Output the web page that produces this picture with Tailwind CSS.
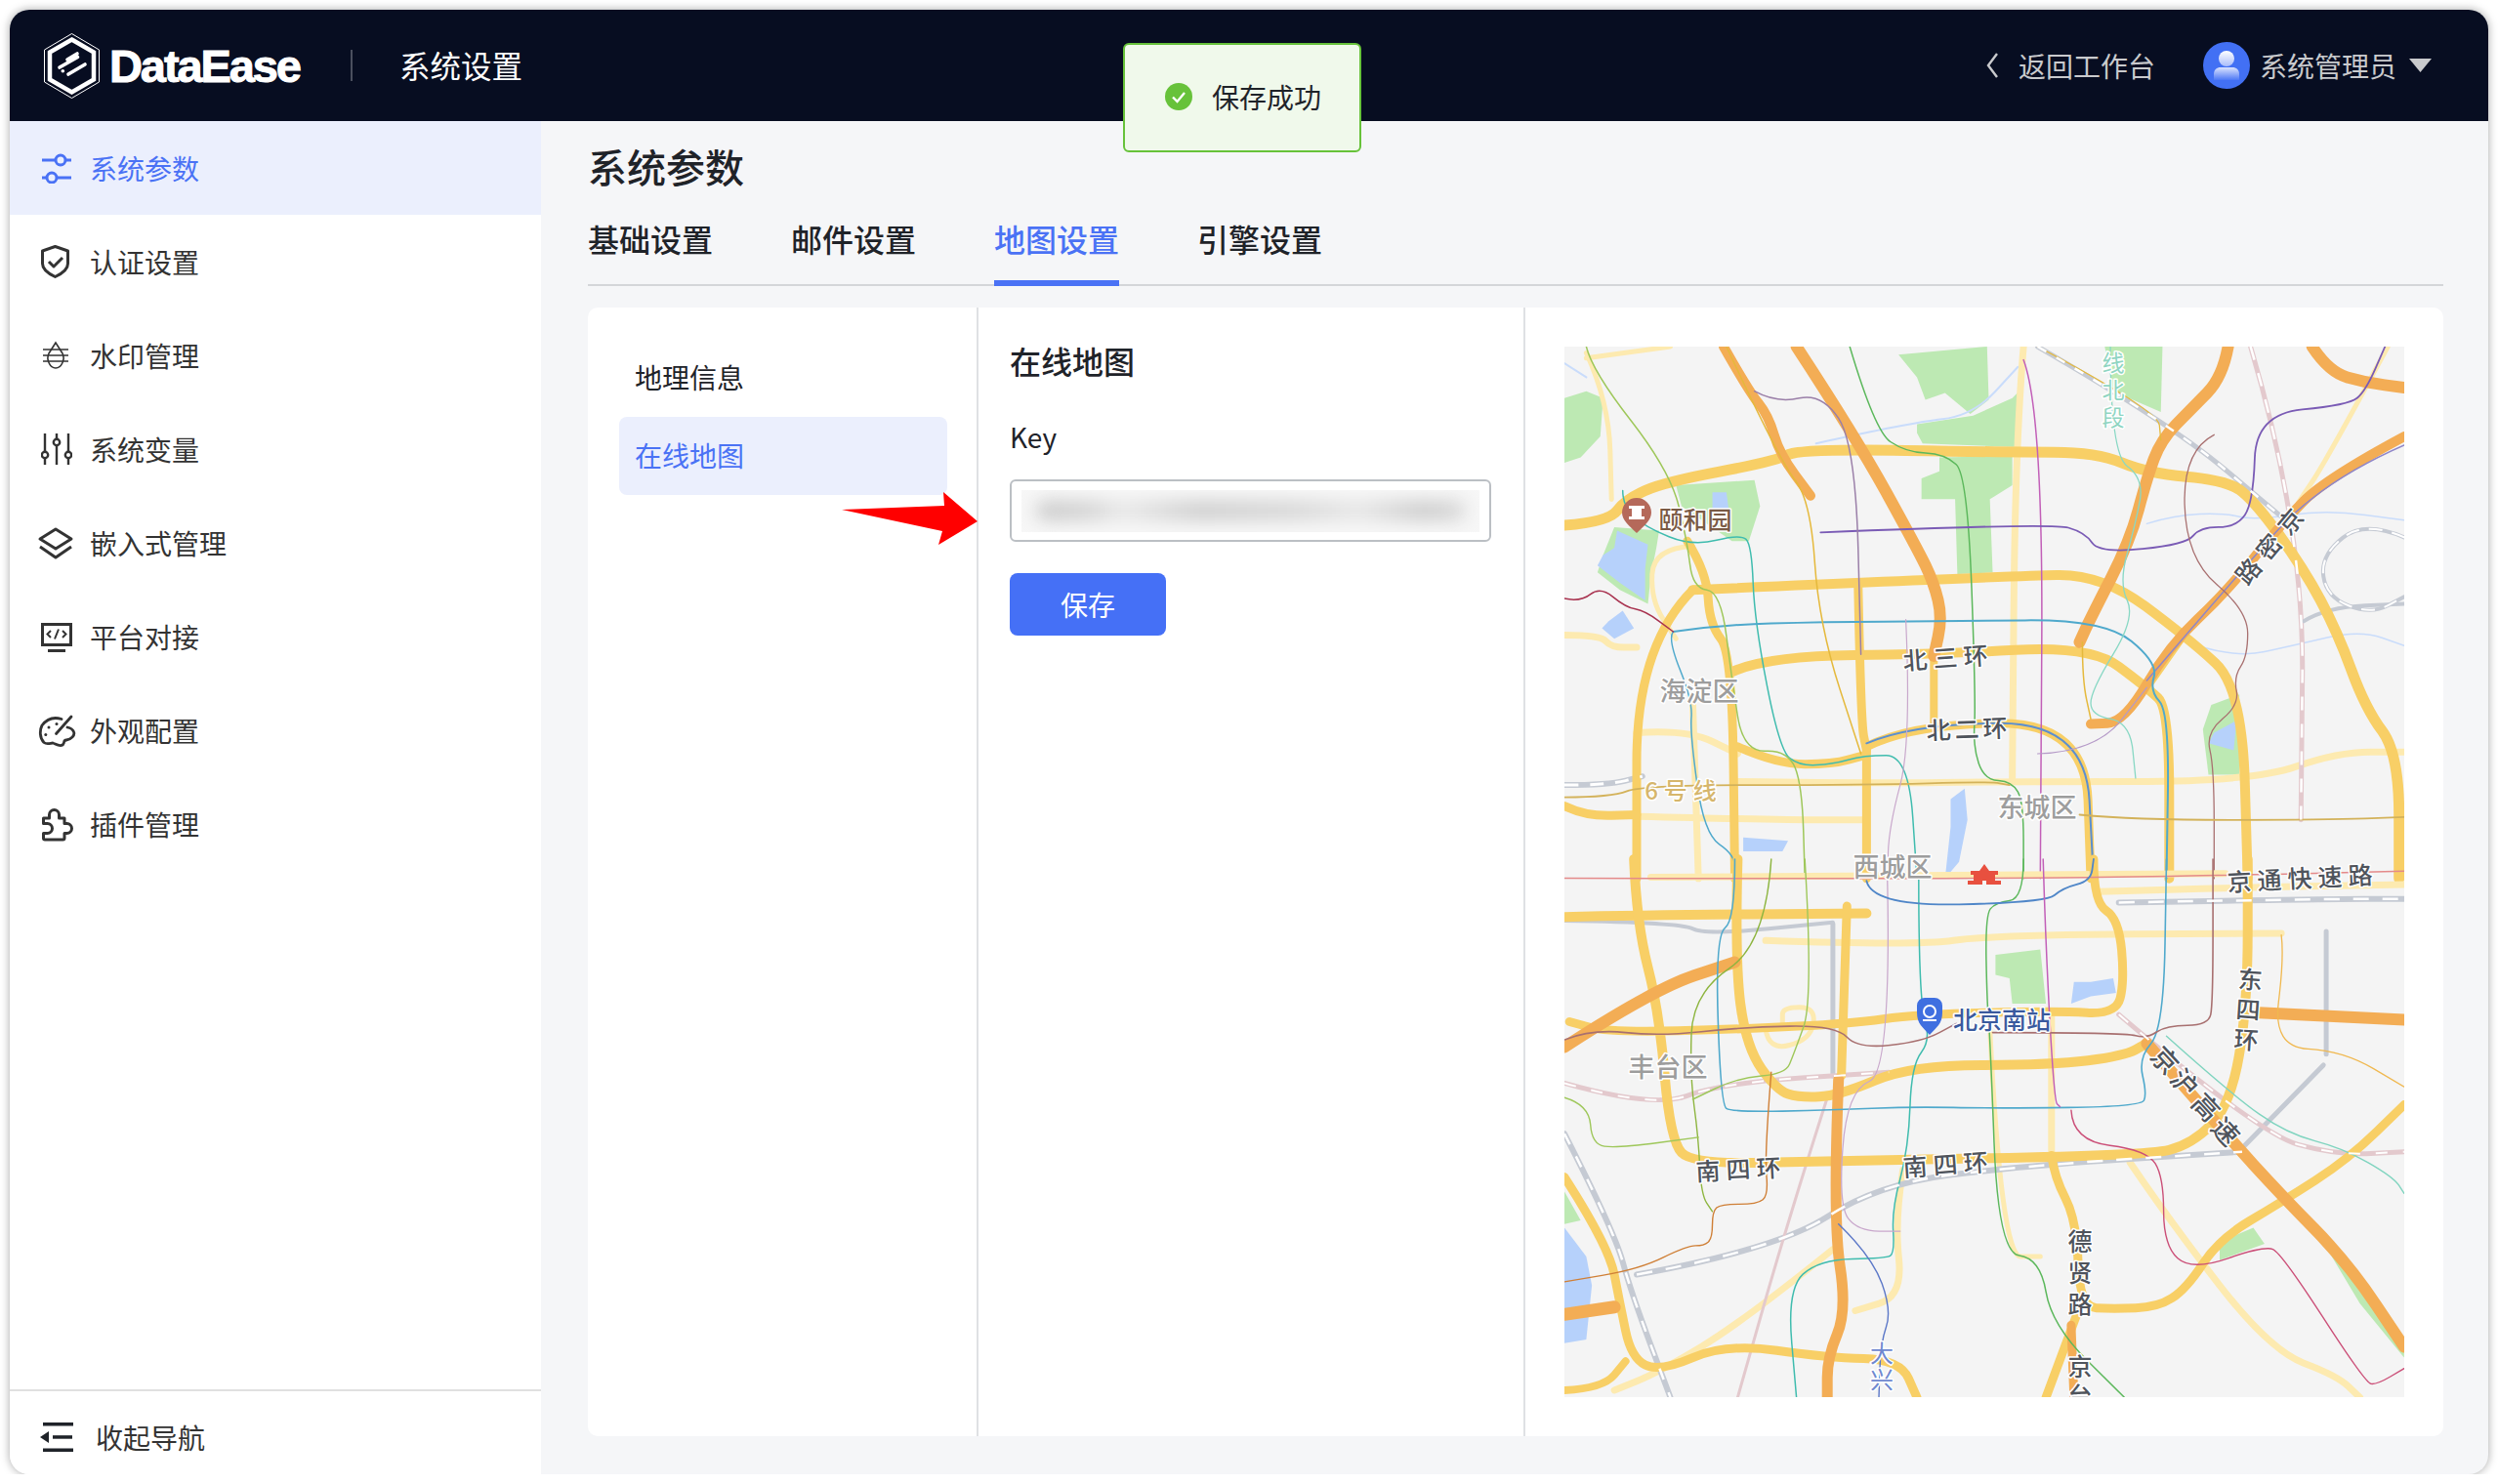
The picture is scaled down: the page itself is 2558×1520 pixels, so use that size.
<!doctype html>
<html>

<head>
    <meta charset="UTF-8">
    <meta name="viewport" content="width=device-width, initial-scale=1.0">
    <script src="https://cdn.jsdelivr.net/npm/@tailwindcss/browser@4"></script>
</head>

<body class="bg-white font-['Noto_Sans_CJK_SC','Liberation_Sans',sans-serif] text-[#333]">
    <div class="relative ml-[10px] mt-[10px] flex h-[1500px] w-[2538px] flex-col overflow-hidden rounded-[20px] bg-[#f5f6f8] shadow-[0_0_10px_rgba(0,0,0,0.35)]">

        <!-- header -->
        <div class="flex h-[114px] shrink-0 items-center bg-[#070d21] pl-[35px] pr-[58px]">
            <svg class="h-[67px] w-[57px]" viewBox="0 0 57 67" fill="none" stroke="#fff">
                <path d="M28.5 .5 56.5 17V50L28.5 66.5.5 50V17Z" stroke-width="1" />
                <path d="M28.5 6.5 51 19.5V47.5L28.5 60.5 6 47.5V19.5Z" stroke-width="4.5" />
                <path d="M24 27 34 21M16 35 34.5 24.5M25 42 42 32" stroke-width="3.6" stroke-linecap="round" />
                <circle cx="19.3" cy="38.8" r="1.8" fill="#fff" stroke="none" />
            </svg>
            <span class="ml-[10px] w-[196px] font-['Liberation_Sans'] text-[47px] font-bold leading-none tracking-[-2.1px] text-white [-webkit-text-stroke:1px_white]">DataEase</span>
            <div class="ml-[51px] h-[32px] w-[2px] bg-[#4a4f5e]"></div>
            <span class="ml-[48px] text-[31.5px] leading-none text-white">系统设置</span>
            <div class="ml-auto flex items-center text-[28px] text-[#c9cacd]">
                <svg class="h-[28px] w-[14px]" viewBox="0 0 14 28" fill="none" stroke="#c9cacd" stroke-width="2.4">
                    <path d="M12 2 3 14 12 26" />
                </svg>
                <span class="ml-[20px]">返回工作台</span>
                <svg class="ml-[49px] h-[48px] w-[48px]" viewBox="0 0 48 48">
                    <defs>
                        <linearGradient id="av1" x1="0" y1="0" x2="0" y2="1">
                            <stop offset="0" stop-color="#fff" />
                            <stop offset="1" stop-color="#a9bcfb" />
                        </linearGradient>
                        <linearGradient id="av2" x1="0" y1="0" x2="0" y2="1">
                            <stop offset="0" stop-color="#dbe3fd" />
                            <stop offset="1" stop-color="#4d78f6" />
                        </linearGradient>
                    </defs>
                    <circle cx="24" cy="24" r="24" fill="#4270f4" />
                    <circle cx="24" cy="17" r="8" fill="url(#av1)" />
                    <path d="M11 39V33C11 28.500 14 26 18 26H30C34 26 37 28.500 37 33V39Z" fill="url(#av2)" />
                </svg>
                <span class="ml-[10px]">系统管理员</span>
                <svg class="ml-[13px] h-[14px] w-[23px]" viewBox="0 0 23 14">
                    <path d="M0 0H23L11.500 14Z" fill="#c9cacd" />
                </svg>
            </div>
        </div>

        <div class="flex min-h-0 flex-1">
            <!-- sidebar -->
            <div class="flex w-[544px] shrink-0 flex-col bg-white">
                <div class="flex-1 text-[28px]">
                    <div class="flex h-[96px] items-center gap-[18px] bg-[#ebeffd] pl-[32px] text-[#4a72f5]">
                        <svg class="h-[32px] w-[32px]" viewBox="0 0 32 32" fill="none" stroke="#4a72f5" stroke-width="3">
                            <path d="M1 8H15M25 8H31M1 26H6M16 26H31" />
                            <circle cx="20" cy="8" r="5" />
                            <circle cx="11" cy="26" r="5" />
                        </svg>
                        <span>系统参数</span>
                    </div>
                    <div class="flex h-[96px] items-center gap-[18px] pl-[32px]">
                        <svg class="h-[34px] w-[32px]" viewBox="0 0 32 34" fill="none" stroke="#333" stroke-width="3" stroke-linejoin="round">
                            <path d="M14.500 1.500 27.500 6V19C27.500 25 21 29.500 14.500 32.500 8 29.500 1.500 25 1.500 19V6Z" />
                            <path d="M8 17l5 5 9-9" />
                        </svg>
                        <span>认证设置</span>
                    </div>
                    <div class="flex h-[96px] items-center gap-[18px] pl-[32px]">
                        <svg class="h-[32px] w-[32px]" viewBox="0 0 32 32" fill="none" stroke="#333" stroke-width="1.600">
                            <path d="M15 3 8 14C5 20 9 29 15 29 21 29 25 20 22 14Z" />
                            <path d="M2 10H28M2 16H28M2 22H28" />
                        </svg>
                        <span>水印管理</span>
                    </div>
                    <div class="flex h-[96px] items-center gap-[18px] pl-[32px]">
                        <svg class="h-[32px] w-[32px]" viewBox="0 0 32 32" fill="#fff" stroke="#333" stroke-width="2.400">
                            <path d="M4 0V32M16 0V32M28 0V32" />
                            <circle cx="4" cy="22" r="3.200" />
                            <circle cx="16" cy="9" r="3.200" />
                            <circle cx="28" cy="22" r="3.200" />
                        </svg>
                        <span>系统变量</span>
                    </div>
                    <div class="flex h-[96px] items-center gap-[18px] pl-[32px]">
                        <svg class="h-[32px] w-[32px] overflow-visible" viewBox="0 0 32 32" fill="none" stroke="#333" stroke-width="3" stroke-linejoin="round">
                            <path d="M15 2 31 12 15 22-1 12Z" />
                            <path d="M-1 20 15 31 31 20" />
                        </svg>
                        <span>嵌入式管理</span>
                    </div>
                    <div class="flex h-[96px] items-center gap-[18px] pl-[32px]">
                        <svg class="h-[32px] w-[32px]" viewBox="0 0 32 32" fill="none" stroke="#333">
                            <rect x="1.500" y="3.500" width="29" height="21" stroke-width="3" />
                            <path d="M7 30.500H25" stroke-width="3" />
                            <path d="M10 10l-3.500 3.500 3.500 3.500M22 10l3.500 3.500-3.500 3.500M18 8.500l-4 10" stroke-width="2" />
                        </svg>
                        <span>平台对接</span>
                    </div>
                    <div class="flex h-[96px] items-center gap-[18px] pl-[32px]">
                        <svg class="h-[32px] w-[32px] overflow-visible" viewBox="0 0 32 32" fill="none" stroke="#333" stroke-width="2.800" stroke-linecap="round">
                            <path d="M21 4.500C13 2 6 4.500 1 11-1.500 16-1.500 24 3 28.500 6 31 10 29 12 29 15 30 19 33 22 31 25 29 22 26.500 26 26 31 25.500 35 21 33.500 17.500 32.500 15 29.500 13.500 27 13" />
                            <path d="M31 2 15.500 19.500" />
                            <circle cx="8" cy="13" r="1.500" fill="#333" stroke="none" />
                            <circle cx="4.800" cy="20.500" r="1.500" fill="#333" stroke="none" />
                            <circle cx="16" cy="9.500" r="1.500" fill="#333" stroke="none" />
                        </svg>
                        <span>外观配置</span>
                    </div>
                    <div class="flex h-[96px] items-center gap-[18px] pl-[32px]">
                        <svg class="h-[32px] w-[32px] overflow-visible" viewBox="0 0 32 32" fill="none" stroke="#333" stroke-width="3" stroke-linejoin="round">
                            <path d="M2.500 10H8.500V6.500a5 5 0 0 1 10 0V10H24V15.500h2.500a5 5 0 0 1 0 10H24V30.500a1.500 1.500 0 0 1-1.500 1.500H4a1.500 1.500 0 0 1-1.500-1.500V25.500H6.500a5 5 0 0 0 0-10H2.500Z" />
                        </svg>
                        <span>插件管理</span>
                    </div>
                </div>
                <div class="flex h-[87px] shrink-0 items-center gap-[23px] border-t-2 border-[#e0e0e0] pl-[31px] pt-[8px] text-[28px] text-[#333]">
                    <svg class="h-[32px] w-[34px]" viewBox="0 0 34 32" fill="#1f2329">
                        <rect x="3" y="1" width="31" height="3.500" />
                        <rect x="3" y="27.500" width="31" height="3.500" />
                        <rect x="13" y="14.200" width="20" height="3.500" />
                        <path d="M0 16 9 10V22Z" />
                    </svg>
                    <span>收起导航</span>
                </div>
            </div>

            <!-- main -->
            <div class="flex min-w-0 flex-1 flex-col pb-[39px] pl-[48px] pr-[46px] pt-[18px]">
                <h1 class="h-[56px] text-[40px] font-medium leading-[56px] text-[#1f2329]">系统参数</h1>
                <div class="mt-[27px] flex h-[68px] shrink-0 gap-[80px] border-b-2 border-[#d4d6d9] text-[32px] font-medium text-[#1f2329]">
                    <div class="h-[68px] leading-[38px]">基础设置</div>
                    <div class="h-[68px] leading-[38px]">邮件设置</div>
                    <div class="h-[68px] border-b-[6px] border-[#4a72f5] leading-[38px] text-[#4a72f5]">地图设置</div>
                    <div class="h-[68px] leading-[38px]">引擎设置</div>
                </div>
                <div class="mt-[22px] flex min-h-0 flex-1 overflow-hidden rounded-[10px] bg-white">
                    <div class="w-[400px] shrink-0 border-r-2 border-[#dfe1e4] pl-[32px] pt-[32px] text-[28px]">
                        <div class="flex h-[80px] w-[336px] items-center pb-[2px] pl-[16px] text-[#1f2329]">地理信息</div>
                        <div class="flex h-[80px] w-[336px] items-center rounded-[8px] bg-[#ebeffd] pb-[2px] pl-[16px] text-[#4a72f5]">在线地图</div>
                    </div>
                    <div class="w-[560px] shrink-0 border-r-2 border-[#dfe1e4] pl-[32px] pt-[32px]">
                        <h2 class="text-[32px] font-medium leading-[44px] text-[#1f2329]">在线地图</h2>
                        <div class="mt-[36px] text-[28px] leading-[40px] text-[#1f2329]">Key</div>
                        <div class="mt-[24px] flex h-[64px] w-[493px] items-center justify-center rounded-[6px] border-2 border-[#bbbfc4] bg-white">
                            <div class="flex h-[43px] w-[469px] items-center overflow-hidden bg-[#f7f7f7]">
                                <div class="mx-auto h-[20px] w-[440px] rounded-full bg-[linear-gradient(90deg,#c8c8c8,#d2d2d2_12%,#e8e8e8_20%,#cdcdcd_38%,#d6d6d6_60%,#e6e6e6_75%,#cbcbcb_90%,#d8d8d8)] blur-[9px]"></div>
                            </div>
                        </div>
                        <button class="mt-[32px] h-[64px] w-[160px] rounded-[8px] bg-[#4570f6] text-[28px] text-white" type="button">保存</button>
                    </div>
                    <div class="min-w-0 flex-1 p-[40px]">
                        <svg id="map" class="block h-[1076px] w-[860px]" viewBox="0 0 860 1076">
                            <rect width="860" height="1076" fill="#f4f4f4" />
                            <g id="areas"></g>
                            <g id="roads" fill="none" stroke-linecap="round" stroke-linejoin="round"></g>
                            <g font-family="Noto Sans CJK SC" paint-order="stroke" stroke="#fff" stroke-width="3" stroke-linejoin="round" text-anchor="middle" dominant-baseline="central">
                                <g fill="#9d9d9d" font-size="27" font-weight="500">
                                    <text x="138" y="351">海淀区</text>
                                    <text x="484" y="470">东城区</text>
                                    <text x="336" y="531">西城区</text>
                                    <text x="106" y="736">丰台区</text>
                                </g>
                                <g fill="#4f545c" font-size="25" font-weight="500">
                                    <text x="393" y="317" letter-spacing="6" transform="rotate(-4 393 317)">北三环</text>
                                    <text x="414" y="390" letter-spacing="4" transform="rotate(-2 414 390)">北二环</text>
                                    <text x="742" y="178" transform="rotate(-50 742 178)">京</text>
                                    <text x="720" y="204" transform="rotate(-50 720 204)">密</text>
                                    <text x="699" y="229" transform="rotate(-50 699 229)">路</text>
                                    <text x="756" y="543" letter-spacing="6" transform="rotate(-3 756 543)">京通快速路</text>
                                    <text x="181" y="841" letter-spacing="6" transform="rotate(-3 181 841)">南四环</text>
                                    <text x="393" y="836" letter-spacing="6" transform="rotate(-4 393 836)">南四环</text>
                                    <text x="700" y="682" writing-mode="vertical-rl" letter-spacing="6" transform="rotate(4 700 682)">东四环</text>
                                    <text x="616" y="730" font-size="27" transform="rotate(47 616 730)">京</text>
                                    <text x="636" y="753" font-size="27" transform="rotate(47 636 753)">沪</text>
                                    <text x="658" y="778" font-size="27" transform="rotate(47 658 778)">高</text>
                                    <text x="678" y="803" font-size="27" transform="rotate(47 678 803)">速</text>
                                    <text x="528" y="952" writing-mode="vertical-rl" letter-spacing="7">德贤路</text>
                                    <text x="528" y="1062" writing-mode="vertical-rl" letter-spacing="5">京台</text>
                                </g>
                                <g fill="#7a5a45" font-size="25" font-weight="500">
                                    <text x="134" y="176">颐和园</text>
                                </g>
                                <g fill="#3a5a9e" font-size="25" font-weight="500">
                                    <text x="448" y="688">北京南站</text>
                                </g>
                                <g fill="#d6b66c" font-size="24" font-weight="500">
                                    <text x="122" y="453" letter-spacing="6">6号线</text>
                                </g>
                                <g fill="#8fd5c2" font-size="23">
                                    <text x="562" y="47" writing-mode="vertical-rl" letter-spacing="5">线北段</text>
                                </g>
                                <g fill="#6f88cf" font-size="24">
                                    <text x="325" y="1046" writing-mode="vertical-rl" letter-spacing="3">大兴</text>
                                </g>
                            </g>
                            <!-- pins -->
                            <path d="M74 191C66 183 59 178 59 170A15 15 0 0 1 89 170C89 178 82 183 74 191Z" fill="#b5695a" />
                            <path d="M66 163H82V166H79V174H82V177H66V174H69V166H66Z" fill="#fff" />
                            <path d="M374 705C367 697 361 694 361 682V675A8 8 0 0 1 369 667H379A8 8 0 0 1 387 675V682C387 694 381 697 374 705Z" fill="#3f6fe0" />
                            <circle cx="374" cy="681" r="6" fill="none" stroke="#fff" stroke-width="2" />
                            <path d="M367 690H381" stroke="#fff" stroke-width="2" />
                            <path d="M430 530 435 537H444V541H441V547H447V551H432V547H428V551H413V547H419V541H416V537H425Z" fill="#e8503f" />
                        </svg>
                    </div>
                </div>
            </div>
        </div>

        <!-- toast -->
        <div class="absolute left-[1140px] top-[34px] flex h-[112px] w-[244px] items-center rounded-[6px] border-2 border-[#67c23a] bg-[#f0f9eb] pb-[3px] pl-[41px] text-[28px] text-[#1f2329]">
            <svg class="h-[28px] w-[28px]" viewBox="0 0 28 28">
                <circle cx="14" cy="14" r="14" fill="#67c23a" />
                <path d="M8 14.500 12.500 19 20 10" fill="none" stroke="#fff" stroke-width="2.400" />
            </svg>
            <span class="ml-[20px]">保存成功</span>
        </div>

        <!-- red arrow drawn over the screenshot -->
        <svg class="absolute left-[852px] top-[494px] h-[64px] w-[150px]" viewBox="0 0 150 64">
            <path d="M0 18 105 14 104 0 139 30 99 54 103 40Z" fill="#ff0000" />
        </svg>
    </div>

    <script>
        // the map is traced from the reference: one block per part, points in crop coordinates
        var SVG_NS = "http://www.w3.org/2000/svg"

        function top_point(x, y) { return [(x - 21) * 0.574, (y - 42) * 0.357] }
        function bottom_point(x, y) { return [(x - 21) * 0.574, 525 + y * 0.37] }

        function parse_points(text, convert) {
            return text.split(" ").map(function (pair) {
                var p = pair.split(",")
                return convert(+p[0], +p[1])
            })
        }

        // smooth line through the midpoints
        function smooth_path(pts) {
            var d = "M" + pts[0][0].toFixed(1) + " " + pts[0][1].toFixed(1)
            for (var i = 1; i < pts.length - 1; i++) {
                var mx = (pts[i][0] + pts[i + 1][0]) / 2
                var my = (pts[i][1] + pts[i + 1][1]) / 2
                d += "Q" + pts[i][0].toFixed(1) + " " + pts[i][1].toFixed(1) + " " + mx.toFixed(1) + " " + my.toFixed(1)
            }
            var last = pts[pts.length - 1]
            return d + "L" + last[0].toFixed(1) + " " + last[1].toFixed(1)
        }

        function add_line(text, convert, color, width, dash) {
            var el = document.createElementNS(SVG_NS, "path")
            el.setAttribute("d", smooth_path(parse_points(text, convert)))
            el.setAttribute("stroke", color)
            el.setAttribute("stroke-width", width)
            if (dash) {
                el.setAttribute("stroke-dasharray", dash)
                el.setAttribute("stroke-linecap", "butt")
            }
            document.getElementById("roads").appendChild(el)
        }

        function add_area(text, convert, color) {
            var el = document.createElementNS(SVG_NS, "polygon")
            el.setAttribute("points", parse_points(text, convert).join(" "))
            el.setAttribute("fill", color)
            document.getElementById("areas").appendChild(el)
        }

        var GREEN = "#bde9b3", WATER = "#b6d1fb", RIVER = "#c9dcfb"
        var YELLOW = "#f8cf66", ORANGE = "#f3ad55", CREAM = "#fdeab0"
        var GREY = "#c5cad3", PINK = "#e3c9cd"

        // parks and water
        ;[
            ["617,65 775,42 778,195 745,235 700,175 665,195 650,130", GREEN],
            ["650,265 750,240 820,190 835,165 825,330 660,320 650,290", GREEN],
            ["690,360 820,355 820,440 780,480 785,690 722,695 718,480 658,480 658,420 690,400", GREEN],
            ["985,42 1088,42 1085,230 1000,170", GREEN],
            ["21,190 60,170 90,190 85,300 50,360 21,375", GREEN],
            ["220,440 360,425 370,500 350,600 320,600 230,500", GREEN],
            ["110,560 190,570 185,620 175,700 170,780 120,740 80,690 90,640", GREEN],
            ["1175,1070 1225,1040 1225,1270 1170,1270 1160,1140", GREEN],
            ["115,570 170,610 165,680 165,770 120,720 80,670 90,640 110,620", WATER],
            ["285,460 310,460 315,520 285,510", WATER],
            ["100,830 125,800 145,850 110,880 88,850", WATER],
            ["710,1340 735,1310 740,1400 725,1520 700,1568 710,1420", WATER],
            ["340,1450 420,1460 410,1490 340,1490", WATER],
            ["1180,1150 1220,1115 1215,1200 1170,1180", WATER]
        ].forEach(function (a) { add_area(a[0], top_point, a[1]) })
        ;[
            ["790,265 870,250 880,400 820,400 815,330 790,320", GREEN],
            ["21,920 50,1000 21,1010", GREEN],
            ["21,1020 60,1100 70,1180 60,1330 21,1340", WATER],
            ["1190,1060 1250,1020 1270,1065 1190,1110", GREEN],
            ["930,340 960,340 1000,330 1005,370 960,380 925,400", WATER],
            ["1350,1020 1430,1130 1519,1350 1519,1380 1440,1230 1390,1100", GREEN]
        ].forEach(function (a) { add_area(a[0], bottom_point, a[1]) })

        // top half of the map
        var top_lines = [
            ["470,320 640,260 750,240 830,100", RIVER, 2],
            ["21,90 60,130", RIVER, 2],
            ["1060,550 1110,525 1200,520 1250,540 1380,510 1519,540", RIVER, 1.5],
            ["1150,900 1220,935 1320,900 1440,855 1519,900", RIVER, 1.5],
            ["840,42 825,330 820,1290", CREAM, 7],
            ["21,870 85,870 105,905 150,905", CREAM, 7],
            ["150,1150 240,1140 330,1210", CREAM, 7],
            ["250,1060 260,1568", CREAM, 7],
            ["330,1290 560,1295 820,1290 1250,1290 1400,1205 1519,1205", CREAM, 7],
            ["150,1390 400,1400 560,1400", CREAM, 7],
            ["60,60 100,200 105,480", CREAM, 5],
            ["60,75 210,42", CREAM, 5],
            ["250,615 180,620 175,770 220,880", CREAM, 5],
            ["1490,42 1380,370 1330,490", CREAM, 5],
            ["1245,42 1340,560 1335,1400", PINK, 5],
            ["865,42 1100,260 1300,530", GREY, 5],
            ["21,1300 100,1300 160,1275", GREY, 6],
            ["1520,590 1450,540 1370,640 1380,760 1460,810 1519,760", GREY, 4],
            ["1340,830 1380,790 1519,780", GREY, 4],
            ["21,555 100,545 130,480 200,430 400,370 440,335 820,345 970,345 1060,405 1200,425 1250,480 1340,680 1400,860 1450,1080 1510,1210 1510,1568", YELLOW, 11],
            ["250,740 820,700 980,695 1135,880 1230,1020 1240,1568", YELLOW, 10],
            ["250,740 150,900 150,1568", YELLOW, 9],
            ["240,600 275,690 280,840 320,920 325,1568", YELLOW, 9],
            ["320,975 385,930 690,925 960,900 1060,1020 1100,1080 1100,1568", YELLOW, 10],
            ["560,1190 640,1125 950,1120 960,1568", YELLOW, 9],
            ["560,1190 560,1568", YELLOW, 9],
            ["330,1190 400,1240 500,1240 555,1215", YELLOW, 9],
            ["545,730 550,1120 560,1200", YELLOW, 9],
            ["680,930 680,1120", YELLOW, 8],
            ["21,1360 60,1390 150,1385", YELLOW, 9],
            ["1130,860 1060,1020", YELLOW, 8],
            ["305,42 350,170 385,240 405,350 460,470", ORANGE, 10],
            ["435,42 540,300 650,620 680,720 695,820 680,930", ORANGE, 12],
            ["1205,42 1195,130 1140,220 1085,310 1060,420 1030,600 960,820 940,890", ORANGE, 12],
            ["1355,42 1385,115 1450,145 1519,160", ORANGE, 12],
            ["1519,300 1380,420 1300,550 1200,750 1100,900 1020,1120 960,1125", ORANGE, 10],
            ["1519,325 1370,430 1210,720 1060,1000", "#8f86c8", 1.5],
            ["945,890 945,1000 960,1110", "#e5b93c", 1.5],
            ["530,42 575,285 630,345 700,350 740,410 755,1060 750,1190 770,1285 820,1290 840,1350 840,1568", "#5cb85c", 1.5],
            ["840,80 875,230 870,1568", "#c25fb8", 1.5],
            ["125,455 125,500 165,560 250,615 335,580 355,610 360,830 405,1200 440,1245 500,1240 555,1215 635,1215 650,1568", "#3fbcae", 1.5],
            ["478,575 890,548 950,575 975,635 1130,610 1155,560 1220,560 1250,490 1255,235 1420,210 1450,170 1485,42", "#7a5bb5", 1.8],
            ["215,860 300,840 480,832 700,830 985,825 1080,950 1065,1030 1100,1090 1095,1568", "#4fa9cc", 2],
            ["215,860 205,880 250,1060 245,1150 270,1440 325,1500 325,1568", "#4fa9cc", 1.5],
            ["21,765 50,775 85,730 130,790 165,800 215,860", "#a8324f", 1.5],
            ["360,170 400,205 480,175 540,320 550,925", "#9a7fa8", 1.5],
            ["310,42 405,370 460,480 475,840 550,1210", "#e5b93c", 1.5],
            ["60,42 70,110 210,400 240,600 250,735 300,745 320,1000 340,1205 420,1200 445,1300 450,1568", "#9ec75a", 1.5],
            ["1180,295 1125,340 1130,650 1240,800 1240,930 1215,990 1225,1070 1165,1150 1180,1250 1180,1568", "#a87070", 1.3],
            ["995,42 995,350 1055,420 1040,550 1010,720 1040,820 960,1030 960,1100 1030,1120 1040,1280", "#88d8c4", 1.3],
            ["560,1180 640,1125 950,1120 965,1568", "#5b8fd0", 2],
            ["865,42 1080,225 1085,310", "#e5b93c", 1.3],
            ["21,1335 105,1335 160,1300 560,1300 780,1290 815,1300", "#d3b25a", 1.8],
            ["940,1385 1035,1400 1380,1400 1519,1392", "#d3b25a", 1.8],
            ["630,825 640,1180 600,1420 597,1568", "#c9a8cc", 1.2],
            ["865,1210 970,1205 1060,1020", "#b59ac8", 1.2]
        ]
        top_lines.forEach(function (l) { add_line(l[0], top_point, l[1], l[2]) })
        add_line("865,42 1100,260 1300,530", top_point, "#fff", 2.5, "10 12")
        add_line("1245,42 1340,560 1335,1400", top_point, "#fff", 2.5, "14 14")
        add_line("21,1300 100,1300 160,1275", top_point, "#fff", 3, "14 12")
        add_line("1520,590 1450,540 1370,640 1380,760 1460,810 1519,760", top_point, "#fff", 2, "14 10")

        // bottom half of the map
        var bottom_lines = [
            ["175,50 1200,40", CREAM, 7],
            ["380,225 650,240 780,210 1300,205", CREAM, 7],
            ["1030,840 1100,1000 1280,1360 1400,1430 1440,1490", CREAM, 7],
            ["890,820 890,420", CREAM, 7],
            ["625,860 610,1000 625,1210 540,1250", CREAM, 7],
            ["500,1080 340,1280 190,1420 110,1470", CREAM, 7],
            ["380,470 385,530 460,500 470,410 410,410 410,450", CREAM, 5],
            ["780,470 800,1100 870,1100", CREAM, 5],
            ["975,90 1180,80 1519,70", CREAM, 7],
            ["21,760 110,1030 140,1200 210,1490", GREY, 6],
            ["150,1150 400,1080 580,900 830,850 1230,810", GREY, 6],
            ["1380,540 1380,200", GREY, 5],
            ["1230,800 1375,570", GREY, 5],
            ["1010,120 1380,110 1519,110", GREY, 6],
            ["500,180 500,600", GREY, 5],
            ["21,170 230,175 270,210 500,175", GREY, 4],
            ["21,620 180,690 300,620 600,590", PINK, 5],
            ["1010,430 1260,760 1400,820 1519,810", PINK, 5],
            ["490,660 420,1000 330,1490", PINK, 3],
            ["21,160 150,155 560,150", YELLOW, 10],
            ["145,0 150,180 190,420 210,780 250,845 500,835 1060,820 1140,790 1210,680 1240,400 1240,0", YELLOW, 10],
            ["330,0 325,280 345,520 400,640 440,660 510,655 640,570 890,570 1020,545 1060,510", YELLOW, 10],
            ["525,130 515,600", YELLOW, 9],
            ["965,0 965,120 1010,165 1020,340 1005,430 900,420 650,430 530,455 345,470 100,480 30,450", YELLOW, 9],
            ["890,820 895,880 935,1000 940,1240 1000,1245 1080,1240 1130,1190 1190,1050 1300,950 1420,830 1519,680", YELLOW, 9],
            ["21,880 100,1070 120,1230 140,1380 190,1420 310,1340 490,1380 620,1385 650,1490", YELLOW, 9],
            ["21,1470 90,1465 130,1390", YELLOW, 8],
            ["940,1240 880,1490", YELLOW, 9],
            ["21,520 180,360 325,285", ORANGE, 12],
            ["1260,425 1519,445", ORANGE, 12],
            ["510,610 500,1000 525,1250 490,1380 490,1490", ORANGE, 11],
            ["1060,510 1200,760 1300,930 1420,1120 1519,1350", ORANGE, 12],
            ["21,1260 110,1240", ORANGE, 13],
            ["925,1290 930,1490", ORANGE, 9],
            ["21,53 740,55 1200,45 1519,33", "#e48a8a", 1.5],
            ["325,0 325,170 290,210 300,680 320,700 500,695 640,685 790,690 1050,685 1060,650 1045,550 1090,470 1095,0", "#4fa9cc", 1.6],
            ["840,0 840,110 790,120 772,155 775,400 780,480 795,1090 870,1105 890,1290 1020,1490", "#5cb85c", 1.5],
            ["653,50 653,390 675,500 640,570 635,800 605,970 610,1090 595,1105 475,1108 418,1190 435,1490", "#3fbcae", 1.5],
            ["597,40 605,590 525,640 510,960 545,1030 620,1030", "#c9a8cc", 1.3],
            ["560,60 570,130 880,120 910,80 960,60 965,0", "#4f86c8", 1.8],
            ["875,0 880,260 895,670 905,685", "#c25fb8", 1.5],
            ["925,695 928,780 1060,805 1090,880 1090,1070 1140,1140 1270,1070 1300,1090 1450,1450 1470,1455 1519,1410", "#cb4f78", 1.4],
            ["21,500 70,470 190,490 340,465 505,460 545,525 660,505 720,455", "#a87070", 1.6],
            ["785,480 1020,480 1060,497 1095,460 1170,460 1178,400 1178,0", "#a87070", 1.6],
            ["1095,490 1210,650 1310,760 1410,800 1500,880 1519,925", "#7fd4bf", 1.4],
            ["1300,210 1305,270 1285,520 1410,530 1519,630", "#f0b84f", 1.3],
            ["390,0 380,235 250,370 245,600 260,770 265,930 285,975", "#8db53f", 1.4],
            ["450,0 465,390 430,540 415,595 330,605 250,665", "#9ec75a", 1.4],
            ["21,660 65,680 70,790 115,800 260,770", "#9ec75a", 1.4],
            ["390,590 378,820 385,930 365,955 300,955 285,975 285,1050 270,1070 240,1070 155,1135 21,1170", "#cf7f36", 1.4],
            ["510,1010 570,1100 605,1250 585,1340 582,1490", "#5c78c8", 1.4]
        ]
        bottom_lines.forEach(function (l) { add_line(l[0], bottom_point, l[1], l[2]) })
        add_line("21,760 110,1030 140,1200 210,1490", bottom_point, "#fff", 2.5, "12 14")
        add_line("150,1150 400,1080 580,900 830,850 1230,810", bottom_point, "#fff", 2.5, "16 14")
        add_line("1010,120 1380,110 1519,110", bottom_point, "#fff", 2.5, "16 14")
        add_line("1010,430 1260,760 1400,820 1519,810", bottom_point, "#fff", 2, "12 16")
        add_line("21,620 180,690 300,620 600,590", bottom_point, "#fff", 2, "12 16")
    </script>
</body>

</html>
